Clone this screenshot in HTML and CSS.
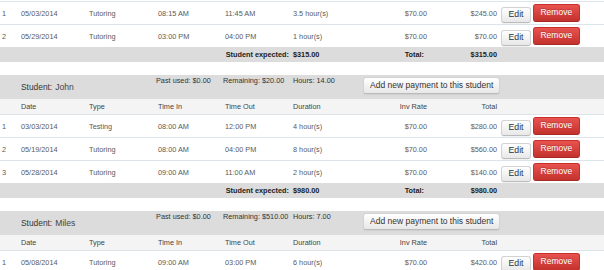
FILE: index.html
```html
<!DOCTYPE html>
<html>
<head>
<meta charset="utf-8">
<link rel="stylesheet" href="styles.css">
</head>
<body>
<table class="grp first">
  <colgroup><col class="c1"><col class="c2"><col class="c3"><col class="c4"><col class="c5"><col class="c6"><col class="c7"><col class="c8"><col class="c9"></colgroup>
  <tr class="row"><td>1</td><td>05/03/2014</td><td>Tutoring</td><td>08:15 AM</td><td>11:45 AM</td><td>3.5 hour(s)</td><td class="r">$70.00</td><td class="r">$245.00</td><td class="act"><div class="acts"><button class="btn edit">Edit</button><button class="btn remove">Remove</button></div></td></tr>
  <tr class="row"><td>2</td><td>05/29/2014</td><td>Tutoring</td><td>03:00 PM</td><td>04:00 PM</td><td>1 hour(s)</td><td class="r">$70.00</td><td class="r">$70.00</td><td class="act"><div class="acts"><button class="btn edit">Edit</button><button class="btn remove">Remove</button></div></td></tr>
  <tr class="sum"><td colspan="5" class="r">Student expected:</td><td>$315.00</td><td class="r tot">Total:</td><td class="r">$315.00</td><td></td></tr>
</table>

<table class="grp">
  <colgroup><col class="c1"><col class="c2"><col class="c3"><col class="c4"><col class="c5"><col class="c6"><col class="c7"><col class="c8"><col class="c9"></colgroup>
  <tr class="head"><td></td><td colspan="2" class="stu"><span class="lbl">Student:</span> <span class="name">John</span></td><td class="info p0">Past used: $0.00</td><td class="info p0">Remaining: $20.00</td><td class="info">Hours: 14.00</td><td colspan="2" class="addc"><button class="btn add">Add new payment to this student</button></td><td></td></tr>
  <tr class="cols"><td></td><td>Date</td><td>Type</td><td>Time In</td><td>Time Out</td><td>Duration</td><td class="r">Inv Rate</td><td class="r">Total</td><td></td></tr>
  <tr class="row"><td>1</td><td>03/03/2014</td><td>Testing</td><td>08:00 AM</td><td>12:00 PM</td><td>4 hour(s)</td><td class="r">$70.00</td><td class="r">$280.00</td><td class="act"><div class="acts"><button class="btn edit">Edit</button><button class="btn remove">Remove</button></div></td></tr>
  <tr class="row"><td>2</td><td>05/19/2014</td><td>Tutoring</td><td>08:00 AM</td><td>04:00 PM</td><td>8 hour(s)</td><td class="r">$70.00</td><td class="r">$560.00</td><td class="act"><div class="acts"><button class="btn edit">Edit</button><button class="btn remove">Remove</button></div></td></tr>
  <tr class="row"><td>3</td><td>05/28/2014</td><td>Tutoring</td><td>09:00 AM</td><td>11:00 AM</td><td>2 hour(s)</td><td class="r">$70.00</td><td class="r">$140.00</td><td class="act"><div class="acts"><button class="btn edit">Edit</button><button class="btn remove">Remove</button></div></td></tr>
  <tr class="sum"><td colspan="5" class="r">Student expected:</td><td>$980.00</td><td class="r tot">Total:</td><td class="r">$980.00</td><td></td></tr>
</table>

<table class="grp">
  <colgroup><col class="c1"><col class="c2"><col class="c3"><col class="c4"><col class="c5"><col class="c6"><col class="c7"><col class="c8"><col class="c9"></colgroup>
  <tr class="head"><td></td><td colspan="2" class="stu"><span class="lbl">Student:</span> <span class="name">Miles</span></td><td class="info p0">Past used: $0.00</td><td class="info p0">Remaining: $510.00</td><td class="info">Hours: 7.00</td><td colspan="2" class="addc"><button class="btn add">Add new payment to this student</button></td><td></td></tr>
  <tr class="cols"><td></td><td>Date</td><td>Type</td><td>Time In</td><td>Time Out</td><td>Duration</td><td class="r">Inv Rate</td><td class="r">Total</td><td></td></tr>
  <tr class="row"><td>1</td><td>05/08/2014</td><td>Tutoring</td><td>09:00 AM</td><td>03:00 PM</td><td>6 hour(s)</td><td class="r">$70.00</td><td class="r">$420.00</td><td class="act"><div class="acts"><button class="btn edit">Edit</button><button class="btn remove">Remove</button></div></td></tr>
</table>
</body>
</html>
```

FILE: styles.css
```css
body {
  margin: 0;
  padding-top: 1px;
  background: #fff;
  font-family: "Liberation Sans", Arial, sans-serif;
  font-size: 7.3px;
  color: #5a5a5a;
}
.grp {
  width: 604px;
  border-collapse: collapse;
  table-layout: fixed;
  margin-top: 13px;
}
.grp.first { margin-top: 0; }
.c1 { width: 19px; }
.c2 { width: 68px; }
.c3 { width: 69px; }
.c4 { width: 67px; }
.c5 { width: 68px; }
.c6 { width: 69px; }
.c7 { width: 69px; }
.c8 { width: 70px; }
.c9 { width: 105px; }
td {
  padding: 0 2px;
  white-space: nowrap;
  overflow: visible;
  vertical-align: middle;
}
td.r { text-align: right; }
.row td {
  height: 22px;
  border-top: 1px solid #dde3e8;
}
.cols td {
  height: 15px;
  background: #f4f4f4;
  color: #444;
  border-bottom: 1px solid #dde3e8;
}
.head td {
  height: 22px;
  background: #dcdcdc;
}
.head td.info {
  vertical-align: top;
  padding-top: 1px;
  color: #333;
}
.head td.p0 { padding-left: 0; }
.stu { color: #333; }
.lbl { font-size: 8.4px; }
.name { font-size: 8.6px; color: #444; margin-left: 1px; }
.sum td {
  height: 15px;
  background: #dcdcdc;
  font-weight: bold;
  color: #222;
}
.sum td.tot { padding-right: 5px; }
td.act { padding: 0 0 0 2px; }
.acts {
  display: flex;
  align-items: flex-start;
  gap: 2px;
}
.addc {
  vertical-align: top;
  padding: 2px 0 0 3px;
}
.btn {
  font-family: "Liberation Sans", Arial, sans-serif;
  font-size: 8.5px;
  box-sizing: border-box;
  border: 1px solid;
  border-radius: 3px;
  margin: 0;
  padding: 0 6.5px;
  line-height: 1;
  cursor: pointer;
}
.edit, .add {
  color: #333;
  background: linear-gradient(#ffffff, #e8e8e8);
  border-color: #d2d2d2 #d2d2d2 #bbbbbb;
  box-shadow: 0 1px 1px rgba(0, 0, 0, 0.06);
}
.edit {
  height: 16px;
  margin-top: 3px;
  font-size: 8.7px;
}
.add {
  height: 17px;
  padding: 0 6px;
}
.remove {
  height: 18px;
  color: #fff;
  background: linear-gradient(#e8534f, #c4322d);
  border-color: #c9302c #c9302c #a82a26;
  text-shadow: 0 -1px 0 rgba(0, 0, 0, 0.2);
}
```
